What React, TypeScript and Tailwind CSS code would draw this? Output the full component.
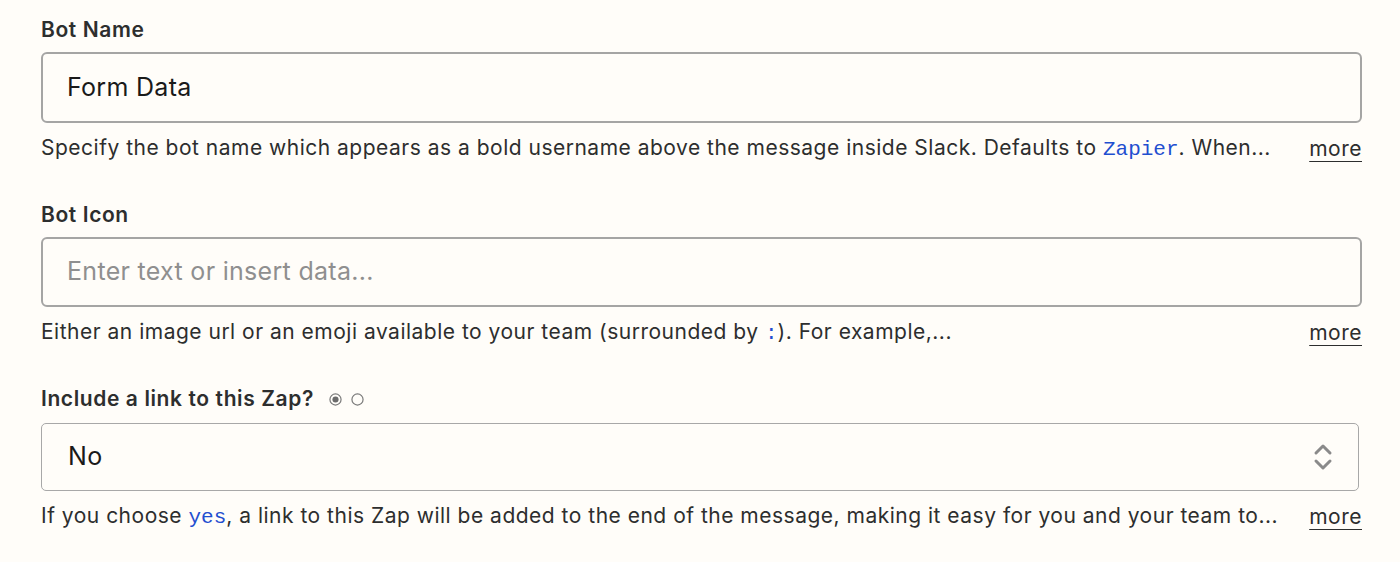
import { ReactNode } from 'react';

function Help({ children }: { children: ReactNode }) {
  return (
    <div className="flex items-center justify-between mt-[11px] text-[21px] leading-[28px] tracking-[0.5px] text-[#2d2e2e]">
      <p className="whitespace-nowrap">{children}</p>
      <a href="#" className="underline underline-offset-[5px] decoration-1 text-[#2d2e2e]">more</a>
    </div>
  );
}

function Code({ children }: { children: ReactNode }) {
  return <span className="text-[#1f4fd0] tracking-normal font-['Liberation_Mono',monospace]">{children}</span>;
}

export default function App() {
  return (
    <div className="min-h-screen bg-[#fffdf9] font-['Inter',sans-serif] text-[#2d2e2e]">
      <div className="pl-[41px] pr-[38px] pt-4">
        {/* Bot Name */}
        <div>
          <label className="block text-[21px] leading-[28px] tracking-[0.6px] font-semibold">Bot Name</label>
          <div className="mt-2 h-[71px] border-2 border-[#8f8f8f]/80 rounded-[6px] flex items-center px-6">
            <span className="text-[25px] tracking-[0.3px] text-[#1a1a1a]">Form Data</span>
          </div>
          <Help>
            Specify the bot name which appears as a bold username above the message inside Slack. Defaults to <Code>Zapier</Code>. When...
          </Help>
        </div>

        {/* Bot Icon */}
        <div className="mt-[37px]">
          <label className="block text-[21px] leading-[28px] tracking-[0.6px] font-semibold">Bot Icon</label>
          <div className="mt-2 h-[70px] border-2 border-[#8f8f8f]/80 rounded-[6px] flex items-center px-6">
            <span className="text-[25px] tracking-[0.3px] text-[#8f8f8f]">Enter text or insert data...</span>
          </div>
          <Help>
            Either an image url or an emoji available to your team (surrounded by <Code>:</Code>). For example,...
          </Help>
        </div>

        {/* Include link */}
        <div className="mt-[37px]">
          <div className="flex items-center gap-[15px]">
            <label className="text-[21px] leading-[28px] tracking-[0.6px] font-semibold">Include a link to this Zap?</label>
            <div className="flex items-center gap-[9px] pt-[1px]">
              <svg width="13" height="13" viewBox="0 0 14 14">
                <circle cx="7" cy="7" r="6" fill="none" stroke="#7a7a7a" strokeWidth="1.3" />
                <circle cx="7" cy="7" r="3.3" fill="#6b6b6b" />
              </svg>
              <svg width="13" height="13" viewBox="0 0 14 14">
                <circle cx="7" cy="7" r="6" fill="none" stroke="#7a7a7a" strokeWidth="1.3" />
              </svg>
            </div>
          </div>
          <div className="mt-[10px] mr-[3px] h-[68px] border border-[#a8a8a8] rounded-[5px] flex items-center justify-between pl-[26px] pr-[24px]">
            <span className="text-[25px] tracking-[0.3px] text-[#1a1a1a]">No</span>
            <svg width="22" height="30" viewBox="0 0 22 30" fill="none" stroke="#8a8a8a" strokeWidth="3" strokeLinecap="round" strokeLinejoin="round">
              <path d="M4 11 L11 4 L18 11" />
              <path d="M4 19 L11 26 L18 19" />
            </svg>
          </div>
          <Help>
            If you choose <Code>yes</Code>, a link to this Zap will be added to the end of the message, making it easy for you and your team to...
          </Help>
        </div>
      </div>
    </div>
  );
}
